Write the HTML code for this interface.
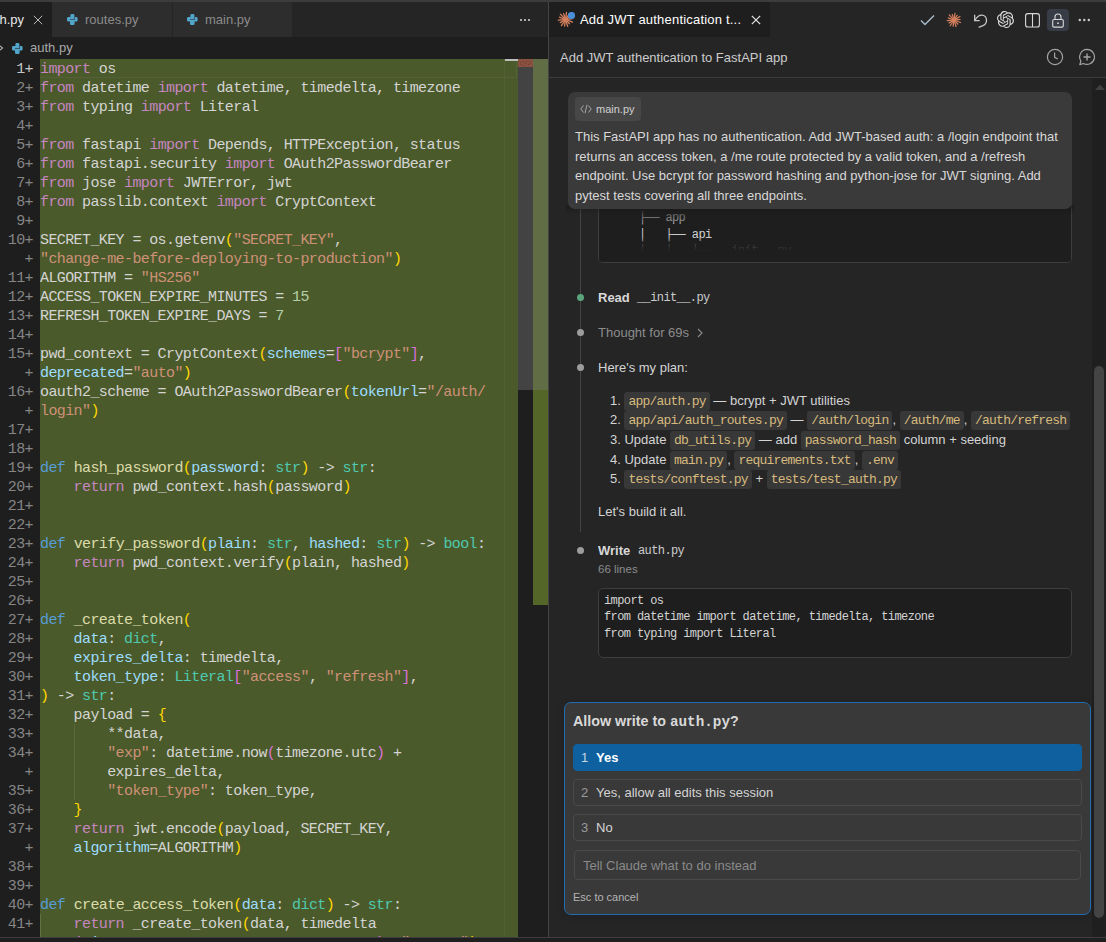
<!DOCTYPE html>
<html><head><meta charset="utf-8">
<style>
*{margin:0;padding:0;box-sizing:border-box}
html,body{width:1106px;height:942px;overflow:hidden;background:#1e1e1e;font-family:"Liberation Sans",sans-serif;color:#cccccc}
.abs{position:absolute}
.ic{line-height:0;display:block}
#topstrip{left:0;top:0;width:1106px;height:2px;background:#3c3c3c}
/* editor */
#etabs{left:0;top:2px;width:548px;height:35px;background:#252526}
.tab{position:absolute;top:0;height:35px;font-size:13px;line-height:35px;white-space:nowrap;overflow:hidden}
#bc{left:0;top:37px;width:548px;height:22px;background:#1e1e1e;font-size:13px;line-height:22px;color:#a9a9a9}
#gutter{left:0;top:59px;width:40px;height:878px;background:#1e1e1e;padding-top:1px}
#code{left:40px;top:59px;width:478px;height:878px;background:#4b5a2a;overflow:hidden;padding-top:1px}
.mono{font-family:"Liberation Mono",monospace}
.row{height:19px;line-height:19px;font-size:15px;letter-spacing:-0.6px;white-space:pre;color:#d4d4d4}
.ln{height:19px;line-height:19px;font-size:15px;letter-spacing:-0.6px;white-space:pre;color:#858585;text-align:right;padding-right:7px}
.k{color:#c586c0}.d{color:#569cd6}.f{color:#dcdcaa}.p{color:#9cdcfe}.t{color:#4ec9b0}.s{color:#ce9178}.y{color:#ffd700}.o{color:#da70d6}.n{color:#b5cea8}
#sbar{left:518px;top:59px;width:15px;height:878px;background:#1e1e1e}
#ruler{left:533px;top:59px;width:15px;height:878px;background:#1e1e1e}
#divider{left:548px;top:2px;width:1px;height:935px;background:#444444}
#bottom{left:0;top:937px;width:1106px;height:5px;background:#1f1f1f;border-top:1px solid #3e3e3e}
/* panel */
#ptabs{left:549px;top:2px;width:557px;height:35px;background:#252526}
#phead{left:549px;top:37px;width:557px;height:41px;background:#252526;border-bottom:1px solid #3c3c3c}
#pbody{left:549px;top:78px;width:557px;height:859px;background:#252526;overflow:hidden}

.ptxt{font-size:13px;color:#d4d4d4;white-space:nowrap}
.cc{font-family:"Liberation Mono",monospace;font-size:13px;letter-spacing:-0.78px;color:#d7ba7d;background:#383838;border-radius:3px;padding:2px 4px 2px 4px;line-height:13px}
.lst div{height:19.5px}
.dot{position:absolute;width:7px;height:7px;border-radius:50%;background:#9d9d9d}
.opt{position:absolute;left:573px;width:509px;height:27px;border:1px solid #4a4a4a;border-radius:4px;font-size:13px;line-height:25px;color:#d4d4d4;white-space:nowrap}
.opt .num{position:absolute;left:7px;top:0;color:#9a9a9a}
.opt .lab{position:absolute;left:22px;top:0}
</style></head><body>
<div id="topstrip" class="abs"></div>
<div id="etabs" class="abs">
  <div class="tab" style="left:0;width:52px;background:#1e1e1e;color:#ffffff"><span class="abs" style="right:28px;top:0;color:#e8e8e8">auth.py</span><svg class="abs" style="left:33px;top:13px" width="10" height="10" viewBox="0 0 10 10"><path d="M0.8 0.8L9.2 9.2M9.2 0.8L0.8 9.2" stroke="#b8b8b8" stroke-width="1"/></svg></div>
  <div class="tab" style="left:52px;width:120px;background:#2d2d2d;color:#8b8b8b"><span class="abs ic" style="left:15px;top:12px"><svg width="11" height="11" viewBox="0 0 11 11"><path d="M3.4 1.2Q3.4 0 4.6 0H6.2Q7.4 0 7.4 1.2V5.2H3V7.5H1.2Q0 7.5 0 6.3V4.2Q0 3 1.2 3H3.4Z" fill="#52a5c9"/><path d="M7.6 9.8Q7.6 11 6.4 11H4.2Q3 11 3 9.8V5.8H7.9V3H9.4Q10.6 3 10.6 4.2V6.3Q10.6 7.5 9.4 7.5H7.6Z" fill="#52a5c9"/></svg></span><span class="abs" style="left:33px;top:0">routes.py</span></div>
  <div class="tab" style="left:173px;width:119px;background:#2d2d2d;color:#8b8b8b"><span class="abs ic" style="left:14px;top:12px"><svg width="11" height="11" viewBox="0 0 11 11"><path d="M3.4 1.2Q3.4 0 4.6 0H6.2Q7.4 0 7.4 1.2V5.2H3V7.5H1.2Q0 7.5 0 6.3V4.2Q0 3 1.2 3H3.4Z" fill="#52a5c9"/><path d="M7.6 9.8Q7.6 11 6.4 11H4.2Q3 11 3 9.8V5.8H7.9V3H9.4Q10.6 3 10.6 4.2V6.3Q10.6 7.5 9.4 7.5H7.6Z" fill="#52a5c9"/></svg></span><span class="abs" style="left:32px;top:0">main.py</span></div>
  <svg class="abs" style="left:519px;top:15px" width="14" height="6" viewBox="0 0 14 6"><circle cx="2" cy="3" r="1.1" fill="#cccccc"/><circle cx="6" cy="3" r="1.1" fill="#cccccc"/><circle cx="10" cy="3" r="1.1" fill="#cccccc"/></svg>
</div>
<div id="bc" class="abs"><svg class="abs" style="left:-3px;top:7px" width="8" height="8" viewBox="0 0 8 8"><path d="M2 1L5.5 4L2 7" stroke="#bbbbbb" stroke-width="1.1" fill="none"/></svg><span class="abs ic" style="left:12px;top:6px"><svg width="11" height="11" viewBox="0 0 11 11"><path d="M3.4 1.2Q3.4 0 4.6 0H6.2Q7.4 0 7.4 1.2V5.2H3V7.5H1.2Q0 7.5 0 6.3V4.2Q0 3 1.2 3H3.4Z" fill="#52a5c9"/><path d="M7.6 9.8Q7.6 11 6.4 11H4.2Q3 11 3 9.8V5.8H7.9V3H9.4Q10.6 3 10.6 4.2V6.3Q10.6 7.5 9.4 7.5H7.6Z" fill="#52a5c9"/></svg></span><span class="abs" style="left:30px;top:0">auth.py</span></div>
<div id="gutter" class="abs mono"><div class="ln" style="color:#c6c6c6">1+</div><div class="ln">2+</div><div class="ln">3+</div><div class="ln">4+</div><div class="ln">5+</div><div class="ln">6+</div><div class="ln">7+</div><div class="ln">8+</div><div class="ln">9+</div><div class="ln">10+</div><div class="ln">+</div><div class="ln">11+</div><div class="ln">12+</div><div class="ln">13+</div><div class="ln">14+</div><div class="ln">15+</div><div class="ln">+</div><div class="ln">16+</div><div class="ln">+</div><div class="ln">17+</div><div class="ln">18+</div><div class="ln">19+</div><div class="ln">20+</div><div class="ln">21+</div><div class="ln">22+</div><div class="ln">23+</div><div class="ln">24+</div><div class="ln">25+</div><div class="ln">26+</div><div class="ln">27+</div><div class="ln">28+</div><div class="ln">29+</div><div class="ln">30+</div><div class="ln">31+</div><div class="ln">32+</div><div class="ln">33+</div><div class="ln">34+</div><div class="ln">+</div><div class="ln">35+</div><div class="ln">36+</div><div class="ln">37+</div><div class="ln">+</div><div class="ln">38+</div><div class="ln">39+</div><div class="ln">40+</div><div class="ln">41+</div><div class="ln">+</div></div>
<div id="code" class="abs mono"><div class="row"><span class="k">import</span> os</div><div class="row"><span class="k">from</span> datetime <span class="k">import</span> datetime, timedelta, timezone</div><div class="row"><span class="k">from</span> typing <span class="k">import</span> Literal</div><div class="row"></div><div class="row"><span class="k">from</span> fastapi <span class="k">import</span> Depends, HTTPException, status</div><div class="row"><span class="k">from</span> fastapi.security <span class="k">import</span> OAuth2PasswordBearer</div><div class="row"><span class="k">from</span> jose <span class="k">import</span> JWTError, jwt</div><div class="row"><span class="k">from</span> passlib.context <span class="k">import</span> CryptContext</div><div class="row"></div><div class="row">SECRET_KEY = os.getenv<span class="y">(</span><span class="s">"SECRET_KEY"</span>,</div><div class="row"><span class="s">"change-me-before-deploying-to-production"</span><span class="y">)</span></div><div class="row">ALGORITHM = <span class="s">"HS256"</span></div><div class="row">ACCESS_TOKEN_EXPIRE_MINUTES = <span class="n">15</span></div><div class="row">REFRESH_TOKEN_EXPIRE_DAYS = <span class="n">7</span></div><div class="row"></div><div class="row">pwd_context = CryptContext<span class="y">(</span><span class="p">schemes</span>=<span class="o">[</span><span class="s">"bcrypt"</span><span class="o">]</span>,</div><div class="row"><span class="p">deprecated</span>=<span class="s">"auto"</span><span class="y">)</span></div><div class="row">oauth2_scheme = OAuth2PasswordBearer<span class="y">(</span><span class="p">tokenUrl</span>=<span class="s">"/auth/</span></div><div class="row"><span class="s">login"</span><span class="y">)</span></div><div class="row"></div><div class="row"></div><div class="row"><span class="d">def</span> <span class="f">hash_password</span><span class="y">(</span><span class="p">password</span>: <span class="t">str</span><span class="y">)</span> -&gt; <span class="t">str</span>:</div><div class="row">    <span class="k">return</span> pwd_context.hash<span class="y">(</span>password<span class="y">)</span></div><div class="row"></div><div class="row"></div><div class="row"><span class="d">def</span> <span class="f">verify_password</span><span class="y">(</span><span class="p">plain</span>: <span class="t">str</span>, <span class="p">hashed</span>: <span class="t">str</span><span class="y">)</span> -&gt; <span class="t">bool</span>:</div><div class="row">    <span class="k">return</span> pwd_context.verify<span class="y">(</span>plain, hashed<span class="y">)</span></div><div class="row"></div><div class="row"></div><div class="row"><span class="d">def</span> <span class="f">_create_token</span><span class="y">(</span></div><div class="row">    <span class="p">data</span>: <span class="t">dict</span>,</div><div class="row">    <span class="p">expires_delta</span>: timedelta,</div><div class="row">    <span class="p">token_type</span>: <span class="t">Literal</span><span class="o">[</span><span class="s">"access"</span>, <span class="s">"refresh"</span><span class="o">]</span>,</div><div class="row"><span class="y">)</span> -&gt; <span class="t">str</span>:</div><div class="row">    payload = <span class="y">{</span></div><div class="row">        **data,</div><div class="row">        <span class="s">"exp"</span>: datetime.now<span class="o">(</span>timezone.utc<span class="o">)</span> +</div><div class="row">        expires_delta,</div><div class="row">        <span class="s">"token_type"</span>: token_type,</div><div class="row">    <span class="y">}</span></div><div class="row">    <span class="k">return</span> jwt.encode<span class="y">(</span>payload, SECRET_KEY,</div><div class="row">    <span class="p">algorithm</span>=ALGORITHM<span class="y">)</span></div><div class="row"></div><div class="row"></div><div class="row"><span class="d">def</span> <span class="f">create_access_token</span><span class="y">(</span><span class="p">data</span>: <span class="t">dict</span><span class="y">)</span> -&gt; <span class="t">str</span>:</div><div class="row">    <span class="k">return</span> _create_token<span class="y">(</span>data, timedelta</div><div class="row">    <span class="o">(</span><span class="p">minutes</span>=ACCESS_TOKEN_EXPIRE_MINUTES<span class="o">)</span>, <span class="s">"access"</span><span class="y">)</span></div></div>
<div id="sbar" class="abs"><svg class="abs" style="left:0;top:0" width="15" height="8" viewBox="0 0 15 8"><rect width="15" height="8" fill="#8b5140"/><g fill="#5a3328"><circle cx="2.3" cy="3.5" r="0.5"/><circle cx="5.3" cy="2.5" r="0.5"/><circle cx="8.3" cy="2.5" r="0.5"/><circle cx="11.3" cy="2.5" r="0.5"/><circle cx="3.3" cy="5.5" r="0.5"/><circle cx="6.3" cy="6.5" r="0.5"/><circle cx="7.5" cy="4.5" r="0.5"/><circle cx="10.3" cy="5.5" r="0.5"/><circle cx="12.3" cy="4.5" r="0.5"/></g></svg><div class="abs" style="left:0;top:8px;width:15px;height:323px;background:#434343"></div></div>
<div id="ruler" class="abs"><div class="abs" style="left:0;top:0;width:15px;height:331px;background:#606d45"></div><div class="abs" style="left:0;top:331px;width:15px;height:215px;background:#556629"></div></div>
<div class="abs" style="left:504px;top:59px;width:1px;height:878px;background:#526134"></div>
<div class="abs" style="left:40px;top:59px;width:477px;height:19px;border:1px solid #536038;border-left:none;border-top:none"></div>
<div class="abs" style="left:505px;top:59px;width:13px;height:2px;background:#bdbdbd"></div>
<div class="abs" style="left:74px;top:724px;width:1px;height:76px;background:#5b6a3e"></div>
<div class="abs" style="left:40px;top:914px;width:1px;height:23px;background:#627045"></div>
<div id="divider" class="abs"></div>
<div id="ptabs" class="abs">
 <div class="tab" style="left:0;width:221px;background:#1e1e1e;color:#ffffff">
  <span class="abs ic" style="left:8px;top:9px"><svg width="17" height="17" viewBox="0 0 16 16"><g stroke="#d37f5d" stroke-width="1.25" stroke-linecap="round"><path d="M8.17 6.81L8.95 1.27"/><path d="M8.67 7.00L11.11 3.34"/><path d="M9.03 7.39L13.94 4.49"/><path d="M9.20 7.90L13.98 7.49"/><path d="M9.12 8.43L14.54 10.49"/><path d="M8.82 8.87L11.78 11.99"/><path d="M8.37 9.14L10.07 14.48"/><path d="M7.83 9.19L7.14 14.14"/><path d="M7.33 9.00L4.17 13.74"/><path d="M6.97 8.61L3.09 10.90"/><path d="M6.80 8.10L1.22 8.58"/><path d="M6.88 7.57L2.30 5.83"/><path d="M7.18 7.13L3.19 2.92"/><path d="M7.63 6.86L6.24 2.48"/></g><circle cx="8" cy="8" r="2" fill="#d37f5d"/></svg></span>
  <div class="abs" style="left:19px;top:10px;width:6.5px;height:6.5px;border-radius:50%;background:#4a90d9"></div>
  <span class="abs" style="left:31px;top:0;letter-spacing:0.2px">Add JWT authentication t...</span>
  <svg class="abs" style="left:202px;top:13px" width="10" height="10" viewBox="0 0 10 10"><path d="M0.8 0.8L9.2 9.2M9.2 0.8L0.8 9.2" stroke="#e8e8e8" stroke-width="1.2"/></svg>
 </div>
 <svg class="abs" style="left:371px;top:12px" width="15" height="12" viewBox="0 0 15 12"><path d="M1 6.5L5 10.5L14 1.5" stroke="#a6bccd" stroke-width="1.4" fill="none"/></svg>
 <span class="abs ic" style="left:397px;top:10px"><svg width="16" height="16" viewBox="0 0 16 16"><g stroke="#d37f5d" stroke-width="1.25" stroke-linecap="round"><path d="M8.17 6.81L8.95 1.27"/><path d="M8.67 7.00L11.11 3.34"/><path d="M9.03 7.39L13.94 4.49"/><path d="M9.20 7.90L13.98 7.49"/><path d="M9.12 8.43L14.54 10.49"/><path d="M8.82 8.87L11.78 11.99"/><path d="M8.37 9.14L10.07 14.48"/><path d="M7.83 9.19L7.14 14.14"/><path d="M7.33 9.00L4.17 13.74"/><path d="M6.97 8.61L3.09 10.90"/><path d="M6.80 8.10L1.22 8.58"/><path d="M6.88 7.57L2.30 5.83"/><path d="M7.18 7.13L3.19 2.92"/><path d="M7.63 6.86L6.24 2.48"/></g><circle cx="8" cy="8" r="2" fill="#d37f5d"/></svg></span>
 <svg class="abs" style="left:423px;top:10px" width="16" height="16" viewBox="0 0 16 16"><path d="M2.7 3.2V8.7H7.2" stroke="#c8c8c8" stroke-width="1.3" fill="none" stroke-linecap="round"/><path d="M2.9 8.5C4.6 5.2 7 3.2 9.8 3.2C12.6 3.2 14.5 5.6 14.5 8.4C14.5 11 13 12.6 11 13.6L7.2 15.2" stroke="#c8c8c8" stroke-width="1.3" fill="none" stroke-linecap="round"/></svg>
 <svg class="abs" style="left:448px;top:9px" width="17" height="17" viewBox="0 0 24 24"><path fill="#e0e0e0" d="M22.28 9.82a5.98 5.98 0 0 0-.52-4.91 6.05 6.05 0 0 0-6.51-2.9A6.07 6.07 0 0 0 4.98 4.18a5.98 5.98 0 0 0-4 2.9 6.05 6.05 0 0 0 .74 7.1 5.98 5.98 0 0 0 .51 4.91 6.05 6.05 0 0 0 6.52 2.9A5.98 5.98 0 0 0 13.26 24a6.06 6.06 0 0 0 5.77-4.21 5.99 5.99 0 0 0 4-2.9 6.06 6.06 0 0 0-.75-7.07zM13.26 22.43a4.48 4.48 0 0 1-2.88-1.04l.14-.08 4.78-2.76a.8.8 0 0 0 .39-.68v-6.74l2.02 1.17a.07.07 0 0 1 .04.05v5.58a4.5 4.5 0 0 1-4.49 4.5zM3.6 18.3a4.47 4.47 0 0 1-.53-3.01l.14.09 4.78 2.76a.77.77 0 0 0 .78 0l5.84-3.37v2.33a.08.08 0 0 1-.03.06L9.74 19.95a4.5 4.5 0 0 1-6.14-1.65zM2.34 7.9a4.49 4.49 0 0 1 2.37-1.97V11.6a.77.77 0 0 0 .39.68l5.81 3.35-2.02 1.17a.08.08 0 0 1-.07 0l-4.83-2.79A4.5 4.5 0 0 1 2.34 7.87zm16.6 3.86L13.1 8.36 15.12 7.2a.08.08 0 0 1 .07 0l4.83 2.79a4.49 4.49 0 0 1-.68 8.1v-5.68a.79.79 0 0 0-.4-.67zm2.01-3.02l-.14-.09-4.77-2.78a.78.78 0 0 0-.79 0L9.41 9.23V6.9a.07.07 0 0 1 .03-.06l4.83-2.79a4.5 4.5 0 0 1 6.68 4.66zM8.31 12.86L6.29 11.7a.08.08 0 0 1-.04-.06V6.07a4.5 4.5 0 0 1 7.37-3.45l-.14.08-4.78 2.76a.8.8 0 0 0-.39.68zm1.1-2.36l2.6-1.5 2.6 1.5v3l-2.6 1.5-2.6-1.5z"/></svg>
 <svg class="abs" style="left:476px;top:11px" width="15" height="15" viewBox="0 0 15 15"><rect x="0.6" y="0.6" width="13.8" height="13.4" rx="2.3" stroke="#d8d8d8" stroke-width="1.1" fill="none"/><path d="M7.5 1V14" stroke="#d8d8d8" stroke-width="1.1"/></svg>
 <div class="abs" style="left:498px;top:7px;width:22px;height:22px;border-radius:4px;background:#383c47"></div>
 <svg class="abs" style="left:503px;top:11px" width="12" height="15" viewBox="0 0 12 15"><path d="M3 6.5V4a3 3 0 0 1 6 0V6.5" stroke="#d8d8d8" stroke-width="1.1" fill="none"/><rect x="0.7" y="6.5" width="10.6" height="7.6" rx="1.3" stroke="#d8d8d8" stroke-width="1.1" fill="none"/><circle cx="6" cy="10.2" r="0.9" fill="#d8d8d8"/></svg>
 <svg class="abs" style="left:529px;top:15px" width="13" height="6" viewBox="0 0 13 6"><circle cx="1.8" cy="3" r="1.2" fill="#cccccc"/><circle cx="6.3" cy="3" r="1.2" fill="#cccccc"/><circle cx="10.8" cy="3" r="1.2" fill="#cccccc"/></svg>
</div>
<div id="phead" class="abs">
 <span class="abs" style="left:11px;top:1px;line-height:40px;font-size:13px;color:#cccccc">Add JWT authentication to FastAPI app</span>
 <svg class="abs" style="left:497px;top:11px" width="18" height="18" viewBox="0 0 18 18"><circle cx="9" cy="9" r="7.6" stroke="#a3a3a3" stroke-width="1.2" fill="none"/><path d="M8.6 4.5V9.4L11.8 11" stroke="#a3a3a3" stroke-width="1.2" fill="none"/></svg>
 <svg class="abs" style="left:529px;top:11px" width="18" height="18" viewBox="0 0 18 18"><path d="M9 1.4a7.5 7.5 0 1 1-3.6 14.1L1.8 16.6 2.9 13A7.5 7.5 0 0 1 9 1.4z" stroke="#a3a3a3" stroke-width="1.2" fill="none" stroke-linejoin="round"/><path d="M9 5.5V12.5M5.5 9H12.5" stroke="#a3a3a3" stroke-width="1.4"/></svg>
</div>
<div id="pbody" class="abs"></div>
<div class="abs" style="left:1092px;top:78px;width:14px;height:859px;background:#1f1f1f"></div>
<svg class="abs" style="left:1095px;top:84px" width="10" height="6" viewBox="0 0 10 6"><path d="M0 6L5 0.5L10 6z" fill="#404040"/></svg>
<div class="abs" style="left:1094px;top:366px;width:10px;height:552px;border-radius:5px;background:#444444"></div>
<!-- timeline -->
<div class="abs" style="left:580px;top:150px;width:1px;height:382px;background:#454545"></div>
<!-- tree code block -->
<div class="abs" style="left:598px;top:150px;width:474px;height:113px;background:#1e1e1e;border:1px solid #3e3e3e;border-radius:5px;overflow:hidden">
 <div class="abs mono" style="left:40px;top:59px;font-size:12px;letter-spacing:-0.6px;line-height:16.5px;white-space:pre;color:#d4d4d4">├── app
│   ├── api
│   │   ├── __init__.py</div>
 <div class="abs" style="left:0;top:0;width:474px;height:113px;background:linear-gradient(to bottom, rgba(30,30,30,1) 0px, rgba(30,30,30,1) 55px, rgba(30,30,30,0.45) 68px, rgba(30,30,30,0) 78px, rgba(30,30,30,0) 86px, rgba(30,30,30,0.8) 94px, rgba(30,30,30,1) 100px)"></div>
</div>
<!-- shadow under bubble -->
<div class="abs" style="left:566px;top:205px;width:508px;height:10px;background:linear-gradient(to bottom, rgba(20,20,20,0.5), rgba(20,20,20,0))"></div>
<!-- message bubble -->
<div class="abs" style="left:568px;top:92px;width:504px;height:117px;background:#3a3a3a;border-radius:7px">
 <div class="abs" style="left:7px;top:5px;width:66px;height:24px;background:#474747;border-radius:4px"></div>
 <svg class="abs" style="left:12px;top:12px" width="12" height="10" viewBox="0 0 12 10"><path d="M3.5 1.5L0.8 5L3.5 8.5M8.5 1.5L11.2 5L8.5 8.5M7 0.8L5 9.2" stroke="#a8a8a8" stroke-width="1" fill="none"/></svg>
 <span class="abs" style="left:28px;top:5px;line-height:24px;font-size:11px;color:#d0d0d0">main.py</span>
 <div class="abs ptxt" style="left:7px;top:35px;line-height:19.6px;color:#d8d8d8">This FastAPI app has no authentication. Add JWT-based auth: a /login endpoint that<br>returns an access token, a /me route protected by a valid token, and a /refresh<br>endpoint. Use bcrypt for password hashing and python-jose for JWT signing. Add<br>pytest tests covering all three endpoints.</div>
</div>
<!-- read -->
<div class="dot" style="left:577px;top:294px;background:#5ba57c"></div>
<div class="abs ptxt" style="left:598px;top:288px;line-height:19px;font-weight:bold;color:#d8d8d8">Read</div>
<div class="abs mono" style="left:637px;top:289px;line-height:19px;font-size:12px;letter-spacing:-0.6px;color:#cccccc;white-space:pre">__init__.py</div>
<!-- thought -->
<div class="dot" style="left:577px;top:329px"></div>
<div class="abs ptxt" style="left:598px;top:323px;line-height:19px;color:#8c8c8c">Thought for 69s</div>
<svg class="abs" style="left:697px;top:328px" width="6" height="10" viewBox="0 0 6 10"><path d="M1 1L5 5L1 9" stroke="#8c8c8c" stroke-width="1.1" fill="none"/></svg>
<!-- plan -->
<div class="dot" style="left:577px;top:364px"></div>
<div class="abs ptxt" style="left:598px;top:358px;line-height:19px">Here's my plan:</div>
<div class="abs ptxt lst" style="left:610px;top:391px;line-height:19.5px">
 <div style="height:19px">1. <span class="cc">app/auth.py</span> — bcrypt + JWT utilities</div>
 <div style="height:20px">2. <span class="cc">app/api/auth_routes.py</span> — <span class="cc">/auth/login</span>, <span class="cc">/auth/me</span>, <span class="cc">/auth/refresh</span></div>
 <div style="height:20px">3. Update <span class="cc">db_utils.py</span> — add <span class="cc">password_hash</span> column + seeding</div>
 <div style="height:19px">4. Update <span class="cc">main.py</span>, <span class="cc">requirements.txt</span>, <span class="cc">.env</span></div>
 <div>5. <span class="cc">tests/conftest.py</span> + <span class="cc">tests/test_auth.py</span></div>
</div>
<div class="abs ptxt" style="left:598px;top:502px;line-height:19px">Let's build it all.</div>
<!-- write -->
<div class="dot" style="left:577px;top:547px"></div>
<div class="abs ptxt" style="left:598px;top:541px;line-height:19px;font-weight:bold;color:#d8d8d8">Write</div>
<div class="abs mono" style="left:638px;top:542px;line-height:19px;font-size:12px;letter-spacing:-0.6px;color:#cccccc;white-space:pre">auth.py</div>
<div class="abs ptxt" style="left:598px;top:560px;line-height:18px;font-size:11.5px;color:#8c8c8c">66 lines</div>
<div class="abs" style="left:598px;top:588px;width:474px;height:70px;background:#1e1e1e;border:1px solid #3e3e3e;border-radius:5px">
 <div class="abs mono" style="left:5px;top:4px;font-size:12px;letter-spacing:-0.6px;line-height:16.4px;white-space:pre;color:#d4d4d4">import os
from datetime import datetime, timedelta, timezone
from typing import Literal</div>
</div>
<!-- dialog -->
<div class="abs" style="left:564px;top:702px;width:527px;height:213px;background:#393939;border:1px solid #1f6db0;border-radius:7px;box-shadow:0 2px 8px rgba(0,0,0,0.12)"></div>
<div class="abs ptxt" style="left:573px;top:711px;line-height:20px;font-size:14.3px;font-weight:bold;color:#d8d8d8">Allow write to <span style="font-family:'Liberation Mono',monospace;font-weight:bold">auth.py</span>?</div>
<div class="opt" style="top:744px;background:#0e609e;border-color:#0e609e"><span class="num" style="color:#c9d6e2">1</span><span class="lab" style="font-weight:bold;color:#ffffff">Yes</span></div>
<div class="opt" style="top:779px"><span class="num">2</span><span class="lab">Yes, allow all edits this session</span></div>
<div class="opt" style="top:814px"><span class="num">3</span><span class="lab">No</span></div>
<div class="abs" style="left:574px;top:850px;width:507px;height:30px;border:1px solid #4a4a4a;border-radius:4px;font-size:13px;line-height:30px;color:#8a8a8a;padding-left:8px;white-space:nowrap">Tell Claude what to do instead</div>
<div class="abs ptxt" style="left:573px;top:888px;line-height:18px;font-size:11px;color:#b4b4b4">Esc to cancel</div>
<div id="bottom" class="abs"></div>
</body></html>
